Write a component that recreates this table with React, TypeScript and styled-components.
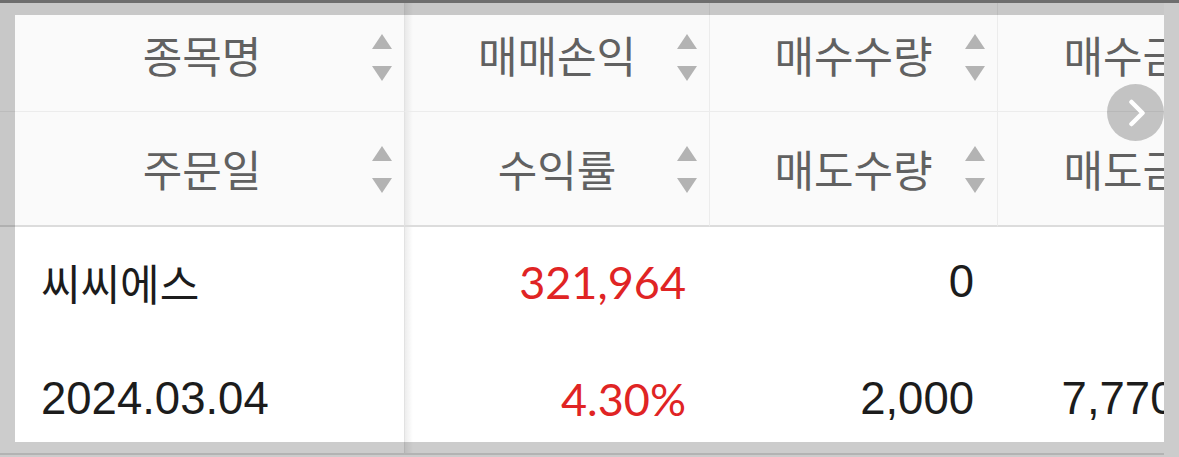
import React from "react";
import styled, { createGlobalStyle } from "styled-components";

const GlobalStyle = createGlobalStyle`
  html, body { margin: 0; padding: 0; background: #ffffff; overflow: hidden; }
  * { box-sizing: border-box; }
`;

const Screen = styled.div`
  position: relative;
  width: 1179px;
  height: 457px;
  overflow: hidden;
  background: #ffffff;
  display: flex;
  flex-direction: column;
`;

const TopBar = styled.div`
  height: 3px;
  flex: none;
  background: #8a8a8a;
`;

const Viewport = styled.div`
  width: 1164px;
  flex: 1;
  overflow: hidden;
`;

const Grid = styled.div`
  display: grid;
  grid-template-columns: 405px 305px 288px 290px;
  grid-template-rows: 109px 115px 228px;
  width: 1288px;
`;

const HeadCell = styled.div<{ $row: 1 | 2; $sticky?: boolean }>`
  position: relative;
  display: grid;
  grid-template-columns: 32px 1fr 32px;
  align-items: center;
  background: #fafafa;
  border-right: 1px solid #ececec;
  border-bottom: ${(p) => (p.$row === 1 ? "1px solid #ececec" : "2px solid #dcdcdc")};
  padding-top: ${(p) => (p.$row === 1 ? "0" : "2px")};
  ${(p) =>
    p.$sticky &&
    `
    border-right: 1px solid #e2e2e2;
    &::after {
      content: "";
      position: absolute;
      top: 0;
      bottom: 0;
      right: -9px;
      width: 8px;
      background: linear-gradient(to right, rgba(0,0,0,0.07), rgba(0,0,0,0));
      z-index: 2;
    }
  `}
`;

const HeadLabel = styled.span<{ $lift: number }>`
  grid-column: 2;
  text-align: center;
  font-family: "Noto Sans CJK KR", "Noto Sans", sans-serif;
  font-size: 43px;
  color: #616161;
  white-space: nowrap;
  line-height: 1;
  margin-bottom: ${(p) => p.$lift}px;
`;

const SortBox = styled.span`
  grid-column: 3;
  display: flex;
  justify-content: flex-start;
  align-items: center;
`;

const BodyCell = styled.div<{ $align: "left" | "right"; $sticky?: boolean }>`
  position: relative;
  display: flex;
  flex-direction: column;
  gap: 47px;
  padding: 20px 24px 0 ${(p) => (p.$align === "left" ? "41px" : "0")};
  align-items: ${(p) => (p.$align === "left" ? "flex-start" : "flex-end")};
  background: #ffffff;
  border-bottom: 2px solid #e0e0e0;
  ${(p) =>
    p.$sticky &&
    `
    border-right: 1px solid #e2e2e2;
    &::after {
      content: "";
      position: absolute;
      top: 0;
      bottom: 0;
      right: -9px;
      width: 8px;
      background: linear-gradient(to right, rgba(0,0,0,0.07), rgba(0,0,0,0));
      z-index: 2;
    }
  `}
`;

const Value = styled.span<{ $kind: "ko" | "num" | "red" }>`
  height: 70px;
  line-height: 70px;
  white-space: nowrap;
  font-family: ${(p) =>
    p.$kind === "ko"
      ? `"Noto Sans CJK KR", "Noto Sans", sans-serif`
      : p.$kind === "red"
      ? `Lato, "Liberation Sans", sans-serif`
      : `"Liberation Sans", Arial, sans-serif`};
  font-size: ${(p) => (p.$kind === "ko" ? "43px" : p.$kind === "red" ? "45px" : "45.5px")};
  color: ${(p) => (p.$kind === "red" ? "#e02424" : "#1c1c1c")};
`;

const ScrollButton = styled.div`
  position: absolute;
  left: 1107px;
  top: 84px;
  width: 57px;
  height: 57px;
  border-radius: 50%;
  background: rgba(0, 0, 0, 0.22);
  display: flex;
  align-items: center;
  justify-content: center;
  padding-left: 2px;
  z-index: 3;
`;

const Dim = styled.div`
  position: absolute;
  left: 15px;
  top: 15px;
  width: 1149px;
  height: 427px;
  box-shadow: 0 0 0 400px rgba(0, 0, 0, 0.2);
  pointer-events: none;
  z-index: 4;
`;

const SortIcon = () => (
  <svg width="20" height="47" viewBox="0 0 20 47">
    <polygon points="0,15 20,15 10,0" fill="#b3b3b3" />
    <polygon points="0,32 20,32 10,47" fill="#b3b3b3" />
  </svg>
);

const Chevron = () => (
  <svg width="18" height="28" viewBox="0 0 18 28">
    <path
      d="M3.5 3 L14.5 14 L3.5 25"
      fill="none"
      stroke="#ffffff"
      strokeWidth="4.5"
      strokeLinecap="round"
      strokeLinejoin="round"
    />
  </svg>
);

const headers1 = ["종목명", "매매손익", "매수수량", "매수금액"];
const headers2 = ["주문일", "수익률", "매도수량", "매도금액"];

type Line = { text: string; kind: "ko" | "num" | "red" };
const body: { align: "left" | "right"; lines: Line[] }[] = [
  { align: "left", lines: [{ text: "씨씨에스", kind: "ko" }, { text: "2024.03.04", kind: "num" }] },
  { align: "right", lines: [{ text: "321,964", kind: "red" }, { text: "4.30%", kind: "red" }] },
  { align: "right", lines: [{ text: "0", kind: "num" }, { text: "2,000", kind: "num" }] },
  { align: "right", lines: [{ text: "0", kind: "num" }, { text: "7,770,000", kind: "num" }] },
];

export default function App() {
  return (
    <>
      <GlobalStyle />
      <Screen>
        <TopBar />
        <Viewport>
          <Grid>
            {headers1.map((h, i) => (
              <HeadCell key={"h1" + i} $row={1} $sticky={i === 0}>
                <HeadLabel $lift={6}>{h}</HeadLabel>
                <SortBox>
                  <SortIcon />
                </SortBox>
              </HeadCell>
            ))}
            {headers2.map((h, i) => (
              <HeadCell key={"h2" + i} $row={2} $sticky={i === 0}>
                <HeadLabel $lift={2}>{h}</HeadLabel>
                <SortBox>
                  <SortIcon />
                </SortBox>
              </HeadCell>
            ))}
            {body.map((c, i) => (
              <BodyCell key={"b" + i} $align={c.align} $sticky={i === 0}>
                {c.lines.map((l, j) => (
                  <Value key={j} $kind={l.kind}>
                    {l.text}
                  </Value>
                ))}
              </BodyCell>
            ))}
          </Grid>
        </Viewport>
        <ScrollButton>
          <Chevron />
        </ScrollButton>
        <Dim />
      </Screen>
    </>
  );
}
